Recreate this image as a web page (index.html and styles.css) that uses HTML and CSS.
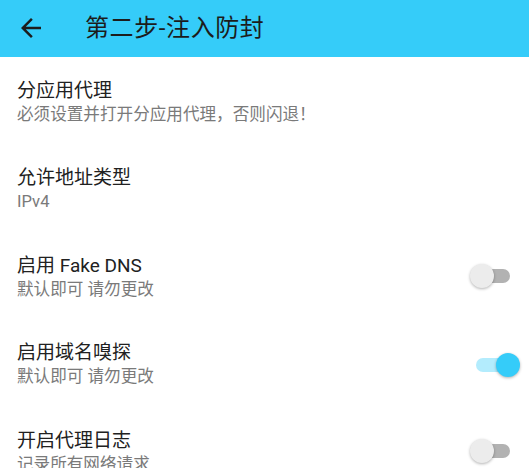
FILE: index.html
```html
<!DOCTYPE html>
<html lang="zh-CN">
<head>
    <meta charset="UTF-8">
    <meta name="viewport" content="width=device-width, initial-scale=1.0">
    <title>第二步-注入防封</title>
    <link rel="stylesheet" href="styles.css">
</head>
<body>
    <div class="toolbar">
        <svg class="back" viewBox="0 0 24 24" width="30" height="30">
            <path d="M20 11H7.83l5.59-5.59L12 4l-8 8 8 8 1.41-1.41L7.83 13H20v-2z"/>
        </svg>
        <div class="toolbar-title">第二步-注入防封</div>
    </div>
    <div class="list">
        <div class="item">
            <div class="text">
                <div class="title">分应用代理</div>
                <div class="summary">必须设置并打开分应用代理，否则闪退！</div>
            </div>
        </div>
        <div class="item">
            <div class="text">
                <div class="title">允许地址类型</div>
                <div class="summary">IPv4</div>
            </div>
        </div>
        <div class="item">
            <div class="text">
                <div class="title">启用 Fake DNS</div>
                <div class="summary">默认即可 请勿更改</div>
            </div>
            <div class="switch"><div class="track"></div><div class="thumb"></div></div>
        </div>
        <div class="item">
            <div class="text">
                <div class="title">启用域名嗅探</div>
                <div class="summary">默认即可 请勿更改</div>
            </div>
            <div class="switch on"><div class="track"></div><div class="thumb"></div></div>
        </div>
        <div class="item">
            <div class="text">
                <div class="title">开启代理日志</div>
                <div class="summary">记录所有网络请求</div>
            </div>
            <div class="switch"><div class="track"></div><div class="thumb"></div></div>
        </div>
    </div>
</body>
</html>
```
FILE: styles.css
```css
body {
    margin: 0;
    background-color: #ffffff;
    font-family: Roboto, "Noto Sans CJK SC", sans-serif;
    color: #212121;
    overflow: hidden;
}
.toolbar {
    height: 57px;
    background-color: #35ccf9;
    display: flex;
    align-items: center;
}
.back {
    margin-left: 16px;
    margin-top: -2px;
    fill: #1c1c1c;
}
.toolbar-title {
    margin-left: 39px;
    font-size: 24px;
    line-height: 30px;
    letter-spacing: 0.6px;
    color: #1c1c1c;
    margin-top: -2px;
}
.item {
    height: 87.5px;
    display: flex;
    align-items: center;
    padding: 0 10px 0 17px;
}
.text {
    flex: 1;
    margin-top: 2px;
}
.title {
    font-size: 19px;
    line-height: 24px;
    color: #212121;
}
.summary {
    font-size: 16.6px;
    line-height: 21px;
    color: #7a7a7a;
    margin-top: 1px;
}
.switch {
    position: relative;
    width: 50px;
    height: 24px;
    margin-right: -1px;
}
.track {
    position: absolute;
    left: 6px;
    top: 5px;
    width: 34px;
    height: 14px;
    border-radius: 7px;
    background-color: #b2b2b2;
}
.thumb {
    position: absolute;
    left: 0;
    top: 0;
    width: 24px;
    height: 24px;
    border-radius: 50%;
    background-color: #ececec;
    box-shadow: 0 1px 3px rgba(0, 0, 0, 0.3);
}
.switch.on {
    margin-top: 4px;
}
.switch.on .track {
    background-color: #b3ecfd;
}
.switch.on .thumb {
    left: auto;
    right: 0;
    background-color: #35ccf9;
}
```
